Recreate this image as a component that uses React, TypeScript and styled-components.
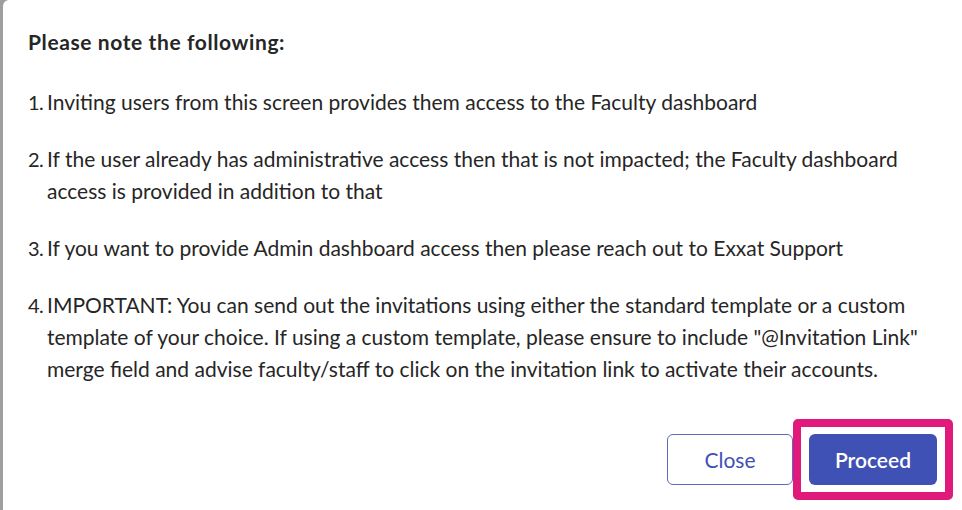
import React from 'react';
import styled, { createGlobalStyle } from 'styled-components';

const GlobalStyle = createGlobalStyle`
    html, body {
        margin: 0;
        padding: 0;
        background: #ffffff;
    }
    body {
        font-family: Lato, "Liberation Sans", sans-serif;
        -webkit-font-smoothing: antialiased;
    }
`;

const notes: { num: string; lines: string[] }[] = [
    { num: '1.', lines: ['Inviting users from this screen provides them access to the Faculty dashboard'] },
    {
        num: '2.',
        lines: [
            'If the user already has administrative access then that is not impacted; the Faculty dashboard',
            'access is provided in addition to that',
        ],
    },
    { num: '3.', lines: ['If you want to provide Admin dashboard access then please reach out to Exxat Support'] },
    {
        num: '4.',
        lines: [
            'IMPORTANT: You can send out the invitations using either the standard template or a custom',
            'template of your choice. If using a custom template, please ensure to include "@Invitation Link"',
            'merge field and advise faculty/staff to click on the invitation link to activate their accounts.',
        ],
    },
];

const App = () => {
    return (
        <>
            <GlobalStyle />
            <Page>
                <Modal>
                    <Title>Please note the following:</Title>
                    <NoteList>
                        {notes.map((note) => (
                            <NoteItem key={note.num}>
                                <Num>{note.num}</Num>
                                <NoteText>
                                    {note.lines.map((line, i) => (
                                        <React.Fragment key={i}>
                                            {i > 0 && <br />}
                                            {line}
                                        </React.Fragment>
                                    ))}
                                </NoteText>
                            </NoteItem>
                        ))}
                    </NoteList>
                    <Footer>
                        <CloseButton>Close</CloseButton>
                        <Highlight>
                            <ProceedButton>Proceed</ProceedButton>
                        </Highlight>
                    </Footer>
                </Modal>
            </Page>
        </>
    );
};

export default App;

// Styled Components
const Page = styled.div`
    display: flex;
    width: 962px;
    height: 510px;
    background-color: #9e9e9e;
    overflow: hidden;
`;

const Modal = styled.div`
    flex: 1;
    display: flex;
    flex-direction: column;
    margin-left: 3px;
    padding: 26px 9px 0 25px;
    background-color: #ffffff;
    border-top-left-radius: 6px;
    color: #262626;
`;

const Title = styled.h2`
    margin: 0;
    font-size: 21px;
    line-height: 31px;
    font-weight: 700;
    letter-spacing: 0.6px;
`;

const NoteList = styled.div`
    display: flex;
    flex-direction: column;
    gap: 25px;
    margin-top: 29px;
`;

const NoteItem = styled.div`
    display: flex;
    font-size: 21px;
    line-height: 32px;
`;

const Num = styled.span`
    flex: 0 0 19px;
    font-size: 20px;
    letter-spacing: -0.5px;
    white-space: nowrap;
`;

const NoteText = styled.span`
    white-space: nowrap;
`;

const Footer = styled.div`
    display: flex;
    justify-content: flex-end;
    align-items: center;
    margin-top: 34px;
`;

const CloseButton = styled.button`
    width: 126px;
    height: 51px;
    padding: 0;
    font-family: inherit;
    font-size: 21px;
    color: #3f51b5;
    background-color: #ffffff;
    border: 1px solid #5c6bc0;
    border-radius: 6px;
    cursor: pointer;
`;

const Highlight = styled.div`
    display: flex;
    padding: 7px 8px;
    border: 8px solid #e0197a;
    border-radius: 5px;
`;

const ProceedButton = styled.button`
    width: 128px;
    height: 51px;
    padding: 0;
    font-family: inherit;
    font-size: 21px;
    font-weight: 600;
    color: #ffffff;
    background-color: #3f51b5;
    border: none;
    border-radius: 6px;
    cursor: pointer;
`;
